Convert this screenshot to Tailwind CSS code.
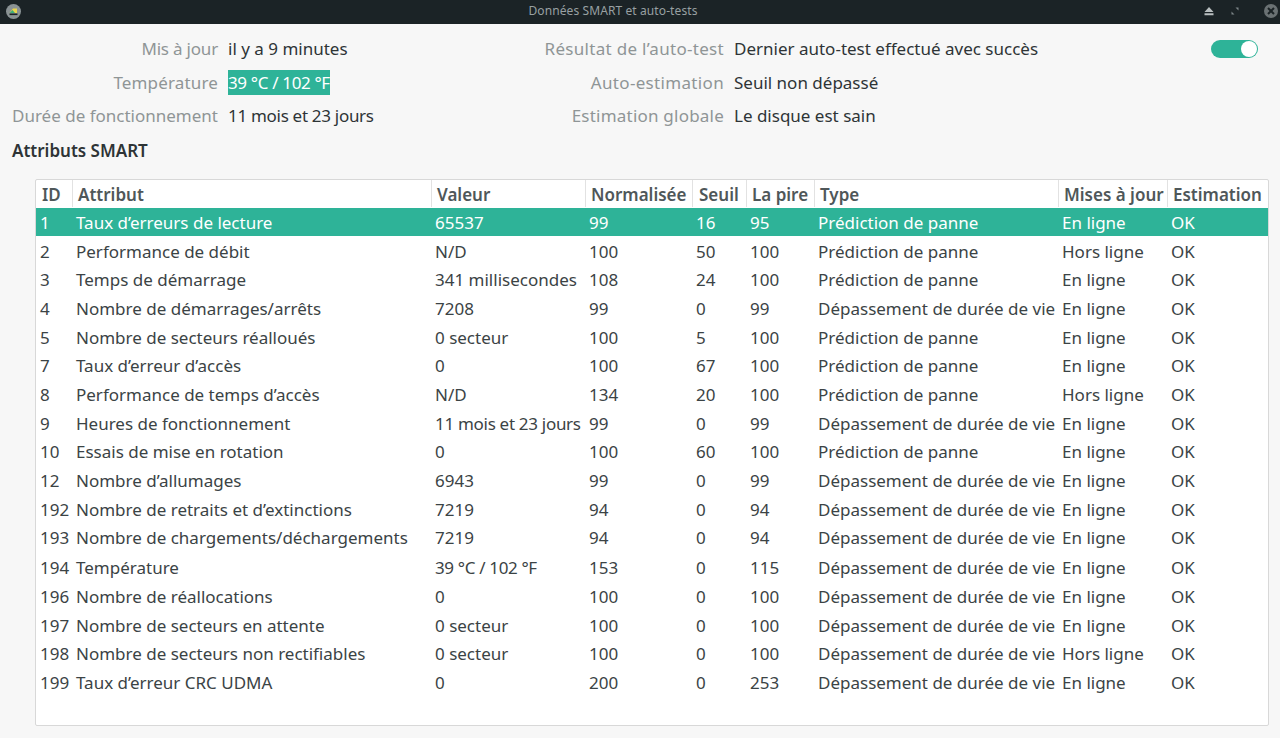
<!DOCTYPE html>
<html lang="fr">
<head>
  <meta charset="UTF-8">
  <title>Données SMART et auto-tests</title>
  <script src="https://cdn.jsdelivr.net/npm/@tailwindcss/browser@4"></script>
</head>
<body class="bg-[#f7f7f7] font-['Noto_Sans',sans-serif] text-[17px] text-[#2e3436] overflow-hidden">
  <div class="h-[738px] w-[1280px] flex flex-col">

    <!-- Title bar -->
    <header class="h-6 pb-[2px] bg-[#1b2326] flex items-center shrink-0">
      <div class="w-[27px] pl-[6px] shrink-0">
        <svg width="15" height="15" viewBox="0 0 15 15">
          <circle cx="7.5" cy="7.5" r="7.5" fill="#8a9294"/>
          <path d="M3.5 9 L7 4.5 L11 4.5 L11 9 Z" fill="#e8d44d"/>
          <path d="M3.5 9 L6.5 6 L9 9 Z" fill="#3cae7c"/>
          <rect x="3.5" y="9.5" width="8" height="1.6" fill="#1b2326"/>
        </svg>
      </div>
      <div class="flex-1 text-center text-[12px] tracking-[0.1px] text-[#98a0a2]">Données SMART et auto-tests</div>
      <div class="w-[81px] flex items-center shrink-0 pl-[5px] gap-[17px]">
        <svg width="10" height="10" viewBox="0 0 10 10"><path d="M5 1 L9.5 6 H0.5 Z M0.5 7.3 H9.5 V9.3 H0.5 Z" fill="#b9bfc0"/></svg>
        <svg width="8" height="8" viewBox="0 0 8 8"><path d="M4.5 0.5 H7.5 V3.5 Z M0.5 4.5 L3.5 7.5 H0.5 Z" fill="#7d8587"/></svg>
        <div class="w-[14px] h-[14px] ml-[8px] rounded-full bg-[#6a7173] flex items-center justify-center">
          <svg width="8" height="8" viewBox="0 0 8 8"><path d="M1 1 L7 7 M7 1 L1 7" stroke="#1b2326" stroke-width="2"/></svg>
        </div>
      </div>
    </header>

    <!-- Summary -->
    <section class="grid grid-cols-[206px_240px_246px_1fr_47px] gap-x-[10px] items-center pl-3 pr-[22px] pt-2 auto-rows-[33.5px]">
      <div class="text-right text-[#8f9596] tracking-[-0.2px]">Mis à jour</div>
      <div>il y a 9 minutes</div>
      <div class="text-right text-[#8f9596] tracking-[0.3px]">Résultat de l’auto-test</div>
      <div>Dernier auto-test effectué avec succès</div>
      <div class="h-[18px] rounded-full bg-[#2eb398] flex justify-end items-center pr-[1px]">
        <div class="w-4 h-4 rounded-full bg-white"></div>
      </div>

      <div class="text-right text-[#8f9596] tracking-[0.15px]">Température</div>
      <div><span class="bg-[#2eb398] text-white inline-block leading-[25px] tracking-[-0.35px]">39 °C / 102 °F</span></div>
      <div class="text-right text-[#8f9596] tracking-[0.33px]">Auto-estimation</div>
      <div class="col-span-2">Seuil non dépassé</div>

      <div class="text-right text-[#8f9596]">Durée de fonctionnement</div>
      <div class="tracking-[-0.3px]">11 mois et 23 jours</div>
      <div class="text-right text-[#8f9596] tracking-[0.22px]">Estimation globale</div>
      <div class="col-span-2">Le disque est sain</div>
    </section>

    <h2 class="font-semibold pl-3 mt-[6px] leading-[24px]">Attributs SMART</h2>

    <!-- Attributes table -->
    <div class="ml-[35px] mr-[11px] mt-4 h-[547px] bg-white border border-[#d8d8d8] rounded-[2px] overflow-hidden">
      <div class="grid grid-cols-[36px_359px_154px_107px_54px_68px_244px_109px_1fr] h-7 items-center font-semibold text-[#4f5759]">
        <div class="pl-[6px] pt-[2px]">ID</div>
        <div class="pl-[5px] pt-[2px] border-l border-[#e2e2e2]">Attribut</div>
        <div class="pl-[5px] pt-[2px] border-l border-[#e2e2e2]">Valeur</div>
        <div class="pl-[5px] pt-[2px] border-l border-[#e2e2e2]">Normalisée</div>
        <div class="pl-[6px] pt-[2px] border-l border-[#e2e2e2]">Seuil</div>
        <div class="pl-[5px] pt-[2px] border-l border-[#e2e2e2]">La pire</div>
        <div class="pl-[5px] pt-[2px] border-l border-[#e2e2e2]">Type</div>
        <div class="pl-[5px] pt-[2px] border-l border-[#e2e2e2]">Mises à jour</div>
        <div class="pl-[5px] pt-[2px] border-l border-[#e2e2e2]">Estimation</div>
      </div>
      <div id="rows"></div>
    </div>
  </div>

  <script>
    const panne = 'Prédiction de panne';
    const vie = 'Dépassement de durée de vie';
    const on = 'En ligne';
    const off = 'Hors ligne';

    const attrs = [
      ['1', 'Taux d’erreurs de lecture', '65537', '99', '16', '95', panne, on],
      ['2', 'Performance de débit', 'N/D', '100', '50', '100', panne, off],
      ['3', 'Temps de démarrage', '341 millisecondes', '108', '24', '100', panne, on],
      ['4', 'Nombre de démarrages/arrêts', '7208', '99', '0', '99', vie, on],
      ['5', 'Nombre de secteurs réalloués', '0 secteur', '100', '5', '100', panne, on],
      ['7', 'Taux d’erreur d’accès', '0', '100', '67', '100', panne, on],
      ['8', 'Performance de temps d’accès', 'N/D', '134', '20', '100', panne, off],
      ['9', 'Heures de fonctionnement', '<span class="tracking-[-0.3px]">11 mois et 23 jours</span>', '99', '0', '99', vie, on],
      ['10', 'Essais de mise en rotation', '0', '100', '60', '100', panne, on],
      ['12', 'Nombre d’allumages', '6943', '99', '0', '99', vie, on],
      ['192', 'Nombre de retraits et d’extinctions', '7219', '94', '0', '94', vie, on],
      ['193', 'Nombre de chargements/déchargements', '7219', '94', '0', '94', vie, on],
      ['194', 'Température', '<span class="tracking-[-0.35px]">39 °C / 102 °F</span>', '153', '0', '115', vie, on],
      ['196', 'Nombre de réallocations', '0', '100', '0', '100', vie, on],
      ['197', 'Nombre de secteurs en attente', '0 secteur', '100', '0', '100', vie, on],
      ['198', 'Nombre de secteurs non rectifiables', '0 secteur', '100', '0', '100', vie, off],
      ['199', 'Taux d’erreur CRC UDMA', '0', '200', '0', '253', vie, on],
    ];

    const rowBase = 'grid grid-cols-[36px_359px_154px_107px_54px_68px_244px_109px_1fr] items-center pl-1 pt-[2px] whitespace-nowrap';
    document.getElementById('rows').innerHTML = attrs.map((a, i) => {
      const color = i === 0 ? 'bg-[#2eb398] text-white' : 'text-[#3b4345]';
      // the row with degree signs is a bit taller
      const height = a[0] === '194' ? 'h-[30px]' : 'h-[28.67px]';
      return `<div class="${rowBase} ${color} ${height}">` +
        a.map(v => `<div>${v}</div>`).join('') + '<div>OK</div></div>';
    }).join('');
  </script>
</body>
</html>
